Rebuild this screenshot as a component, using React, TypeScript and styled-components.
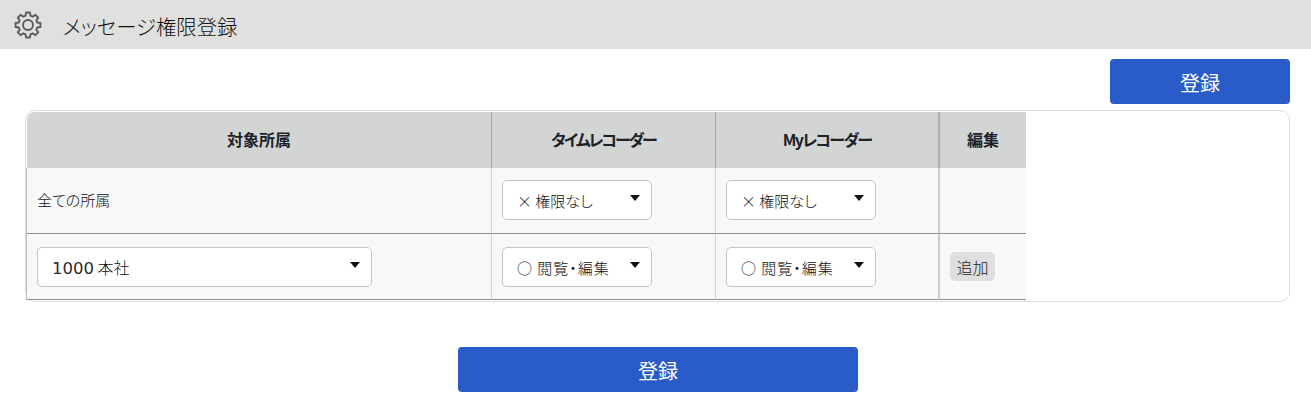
import React from "react";
import styled, { createGlobalStyle } from "styled-components";

const Global = createGlobalStyle`
  html, body { margin: 0; padding: 0; background: #fff; }
  body {
    font-family: "Noto Sans CJK JP", "Noto Sans", sans-serif;
    font-feature-settings: "palt";
    color: #1a1a1a;
  }
  button { font-feature-settings: "palt"; }
`;

const Page = styled.div`
  width: 1311px;
  height: 414px;
  overflow: hidden;
`;

const TitleBar = styled.header`
  height: 49px;
  background: #e0e0de;
  display: flex;
  align-items: center;
  padding-left: 14px;
  gap: 21px;
`;

const Title = styled.h1`
  margin: 0;
  padding-top: 2px;
  font-size: 20.4px;
  font-weight: 300;
  color: #111;
`;

const TopActions = styled.div`
  display: flex;
  justify-content: flex-end;
  padding: 10px 21px 6px 0;
`;

const PrimaryButton = styled.button<{ $width: number }>`
  width: ${(p) => p.$width}px;
  height: 45px;
  border: 0;
  border-radius: 4px;
  background: #295cc8;
  color: #fff;
  font-family: inherit;
  font-size: 20px;
  font-weight: 400;
  padding: 2px 0 0;
`;

const Card = styled.section`
  margin: 0 21px 0 25px;
  height: 192px;
  box-sizing: border-box;
  border: 1px solid #dcdcdc;
  border-radius: 10px;
  padding: 1px;
`;

const Table = styled.table`
  border-collapse: separate;
  border-spacing: 0;
  table-layout: fixed;
  width: 999px;
`;

const HeadCell = styled.th<{ $width: number; $thick?: boolean; $spacing?: number }>`
  width: ${(p) => p.$width}px;
  height: 56px;
  box-sizing: border-box;
  padding: 0 0 2px;
  background: #d3d5d5;
  color: #1d2229;
  font-size: 16px;
  font-weight: 700;
  letter-spacing: ${(p) => p.$spacing ?? 0}px;
  border-left: ${(p) => (p.$thick ? "2px solid #aeaeae" : "1px solid #a8a8a8")};
  &:first-child { border-left: 0; border-top-left-radius: 8px; }
`;

const Cell = styled.td<{ $thick?: boolean; $upper?: boolean }>`
  height: 66px;
  box-sizing: border-box;
  padding: 0 10px ${(p) => (p.$upper ? "2px" : "0")};
  background: #f8f8f8;
  border-left: ${(p) => (p.$thick ? "2px solid #cbcbcb" : "1px solid #cfcfcf")};
  border-bottom: 1px solid #8f8f8f;
  font-size: 15px;
  font-weight: 300;
  color: #111;
  vertical-align: middle;
  &:first-child { border-left: 0; box-shadow: -1px 0 0 #bdbdbd; }
`;

const Select = styled.div<{ $width: number; $large?: boolean }>`
  width: ${(p) => p.$width}px;
  height: 40px;
  box-sizing: border-box;
  background: #fff;
  border: 1px solid #c4c4c4;
  border-radius: 5px;
  display: flex;
  align-items: center;
  justify-content: space-between;
  padding: 1px 11px 0 14px;
  font-size: ${(p) => (p.$large ? "16px" : "15px")};
  font-weight: 300;
  color: #111;
`;

const SelectText = styled.span<{ $spacing: number }>`
  white-space: pre;
  letter-spacing: ${(p) => p.$spacing}px;
`;

const Digits = styled.span`
  font-family: "DejaVu Sans", sans-serif;
  font-size: 16.5px;
  font-weight: 400;
  color: #2a2a2a;
`;

const Caret = styled.span`
  width: 0;
  height: 0;
  margin-bottom: 5px;
  border-left: 5px solid transparent;
  border-right: 5px solid transparent;
  border-top: 6px solid #111;
`;

const AddButton = styled.button`
  height: 29px;
  width: 45px;
  padding: 0;
  border: 0;
  border-radius: 5px;
  background: #dfdfdf;
  color: #222;
  font-family: inherit;
  font-size: 16px;
  font-weight: 300;
`;

const BottomActions = styled.div`
  display: flex;
  justify-content: center;
  padding: 45px 0 0 5px;
`;

const gearPath = (() => {
  const c = 14;
  const pt = (r: number, deg: number) => {
    const a = (deg * Math.PI) / 180;
    return `${(c + r * Math.sin(a)).toFixed(2)} ${(c - r * Math.cos(a)).toFixed(2)}`;
  };
  const parts: string[] = [];
  for (let k = 0; k < 8; k++) {
    const a = k * 45;
    parts.push(pt(9.6, a - 15), pt(12.6, a - 9), pt(12.6, a + 9), pt(9.6, a + 15));
  }
  return `M${parts.join("L")}Z`;
})();

const Gear = () => (
  <svg width="28" height="28" viewBox="0 0 28 28" fill="none" stroke="#5a5a5a" strokeWidth="1.9" strokeLinejoin="round">
    <path d={gearPath} />
    <circle cx="14" cy="14" r="5" />
  </svg>
);

const Drop = ({ width, large, spacing = 0, children }: { width: number; large?: boolean; spacing?: number; children: React.ReactNode }) => (
  <Select $width={width} $large={large}>
    <SelectText $spacing={spacing}>{children}</SelectText>
    <Caret />
  </Select>
);

export default function App() {
  return (
    <Page>
      <Global />
      <TitleBar>
        <Gear />
        <Title>メッセージ権限登録</Title>
      </TitleBar>
      <TopActions>
        <PrimaryButton $width={180}>登録</PrimaryButton>
      </TopActions>
      <Card>
        <Table>
          <thead>
            <tr>
              <HeadCell $width={464}>対象所属</HeadCell>
              <HeadCell $width={224} $spacing={-2}>タイムレコーダー</HeadCell>
              <HeadCell $width={223} $spacing={-1.6}>Myレコーダー</HeadCell>
              <HeadCell $width={88} $thick>編集</HeadCell>
            </tr>
          </thead>
          <tbody>
            <tr>
              <Cell $upper>全ての所属</Cell>
              <Cell $upper><Drop width={150}>× 権限なし</Drop></Cell>
              <Cell $upper><Drop width={150}>× 権限なし</Drop></Cell>
              <Cell $upper $thick />
            </tr>
            <tr>
              <Cell><Drop width={335} large><Digits>1000</Digits> 本社</Drop></Cell>
              <Cell><Drop width={150} spacing={1}>○ 閲覧・編集</Drop></Cell>
              <Cell><Drop width={150} spacing={1}>○ 閲覧・編集</Drop></Cell>
              <Cell $thick><AddButton>追加</AddButton></Cell>
            </tr>
          </tbody>
        </Table>
      </Card>
      <BottomActions>
        <PrimaryButton $width={400}>登録</PrimaryButton>
      </BottomActions>
    </Page>
  );
}
